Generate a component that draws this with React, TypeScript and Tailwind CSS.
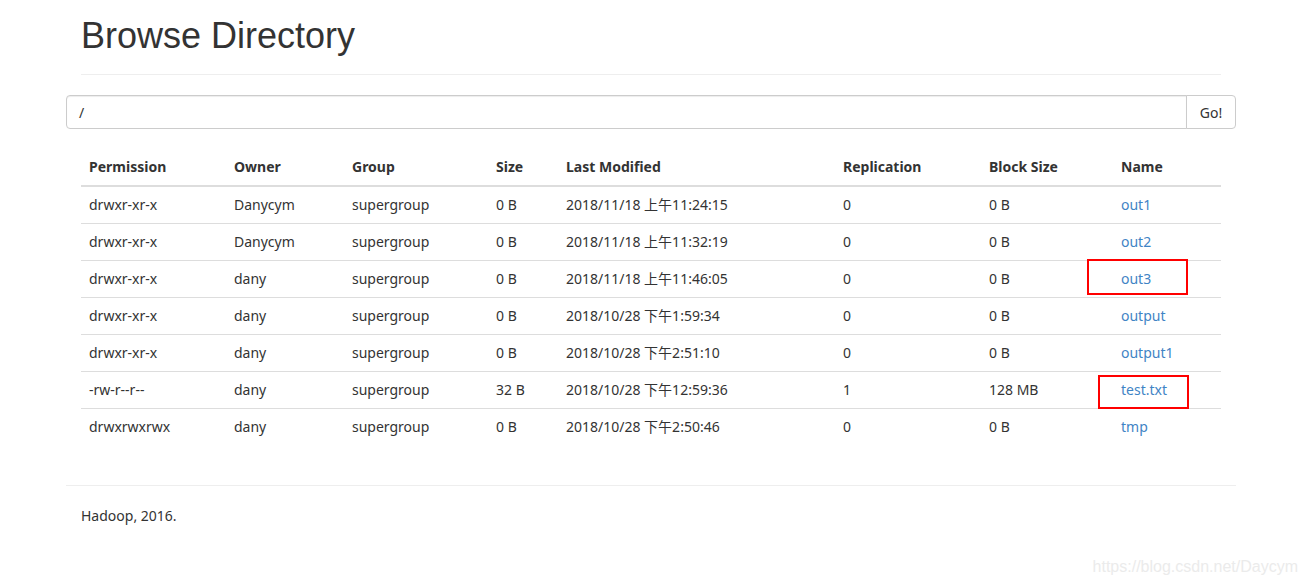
import React from 'react'

interface Entry {
  perm: string
  owner: string
  size: string
  modified: string
  repl: string
  block: string
  name: string
  marked?: 'a' | 'b'
}

const entries: Entry[] = [
  { perm: 'drwxr-xr-x', owner: 'Danycym', size: '0 B', modified: '2018/11/18 上午11:24:15', repl: '0', block: '0 B', name: 'out1' },
  { perm: 'drwxr-xr-x', owner: 'Danycym', size: '0 B', modified: '2018/11/18 上午11:32:19', repl: '0', block: '0 B', name: 'out2' },
  { perm: 'drwxr-xr-x', owner: 'dany', size: '0 B', modified: '2018/11/18 上午11:46:05', repl: '0', block: '0 B', name: 'out3', marked: 'a' },
  { perm: 'drwxr-xr-x', owner: 'dany', size: '0 B', modified: '2018/10/28 下午1:59:34', repl: '0', block: '0 B', name: 'output' },
  { perm: 'drwxr-xr-x', owner: 'dany', size: '0 B', modified: '2018/10/28 下午2:51:10', repl: '0', block: '0 B', name: 'output1' },
  { perm: '-rw-r--r--', owner: 'dany', size: '32 B', modified: '2018/10/28 下午12:59:36', repl: '1', block: '128 MB', name: 'test.txt', marked: 'b' },
  { perm: 'drwxrwxrwx', owner: 'dany', size: '0 B', modified: '2018/10/28 下午2:50:46', repl: '0', block: '0 B', name: 'tmp' },
]

const headers = ['Permission', 'Owner', 'Group', 'Size', 'Last Modified', 'Replication', 'Block Size', 'Name']
const widths = ['w-[145px]', 'w-[118px]', 'w-[144px]', 'w-[70px]', 'w-[277px]', 'w-[146px]', 'w-[132px]', 'w-[108px]']

function App() {
  return (
    <div
      className="relative min-h-[586px] bg-white text-[14px] text-[#333]"
      style={{ fontFamily: '"Noto Sans", "Noto Sans CJK SC", sans-serif' }}
    >
      <div className="ml-[66px] w-[1170px]">
        <div className="mx-[15px] border-b border-[#eee] pt-[16px] pb-[18px]">
          <h1
            className="text-[36px] leading-[40px] font-normal"
            style={{ fontFamily: '"Liberation Sans", Arial, sans-serif' }}
          >
            Browse Directory
          </h1>
        </div>

        <div className="mt-[20px] flex h-[34px]">
          <div className="flex flex-1 items-center rounded-l-[4px] border border-[#ccc] px-[12px] shadow-[inset_0_1px_1px_rgba(0,0,0,0.075)]">
            /
          </div>
          <button className="-ml-px w-[50px] rounded-r-[4px] border border-[#ccc] bg-white text-center">
            Go!
          </button>
        </div>

        <div className="mx-[15px] mt-[20px]">
          <table className="w-full table-fixed border-collapse">
            <thead>
              <tr className="border-b-2 border-[#ddd]">
                {headers.map((h, i) => (
                  <th key={h} className={`${widths[i]} px-[8px] py-[8px] text-left font-bold leading-[20px]`}>
                    {h}
                  </th>
                ))}
              </tr>
            </thead>
            <tbody>
              {entries.map((e) => (
                <tr key={e.name} className="border-b border-[#ddd] last:border-b-0">
                  <td className="px-[8px] py-[8px] leading-[20px]">{e.perm}</td>
                  <td className="px-[8px] py-[8px] leading-[20px]">{e.owner}</td>
                  <td className="px-[8px] py-[8px] leading-[20px]">supergroup</td>
                  <td className="px-[8px] py-[8px] leading-[20px]">{e.size}</td>
                  <td className="px-[8px] py-[8px] leading-[20px]">{e.modified}</td>
                  <td className="px-[8px] py-[8px] leading-[20px]">{e.repl}</td>
                  <td className="px-[8px] py-[8px] leading-[20px]">{e.block}</td>
                  <td className="relative px-[8px] py-[8px] leading-[20px]">
                    <a href="#" className="text-[#3f84c5]">{e.name}</a>
                    {e.marked === 'a' && (
                      <span className="pointer-events-none absolute top-[-2px] left-[-26px] h-[36px] w-[101px] border-2 border-[#f00]" />
                    )}
                    {e.marked === 'b' && (
                      <span className="pointer-events-none absolute top-[3px] left-[-15px] h-[34px] w-[91px] border-2 border-[#f00]" />
                    )}
                  </td>
                </tr>
              ))}
            </tbody>
          </table>
        </div>

        <div className="mt-[40px] border-t border-[#eee] px-[15px] pt-[20px]">
          <p className="leading-[20px]">Hadoop, 2016.</p>
        </div>
      </div>

      <div
        className="absolute right-[10px] bottom-[7px] text-[16px] text-[#ebebeb]"
        style={{ fontFamily: '"Liberation Sans", Arial, sans-serif' }}
      >
        https://blog.csdn.net/Daycym
      </div>
    </div>
  )
}

export default App
